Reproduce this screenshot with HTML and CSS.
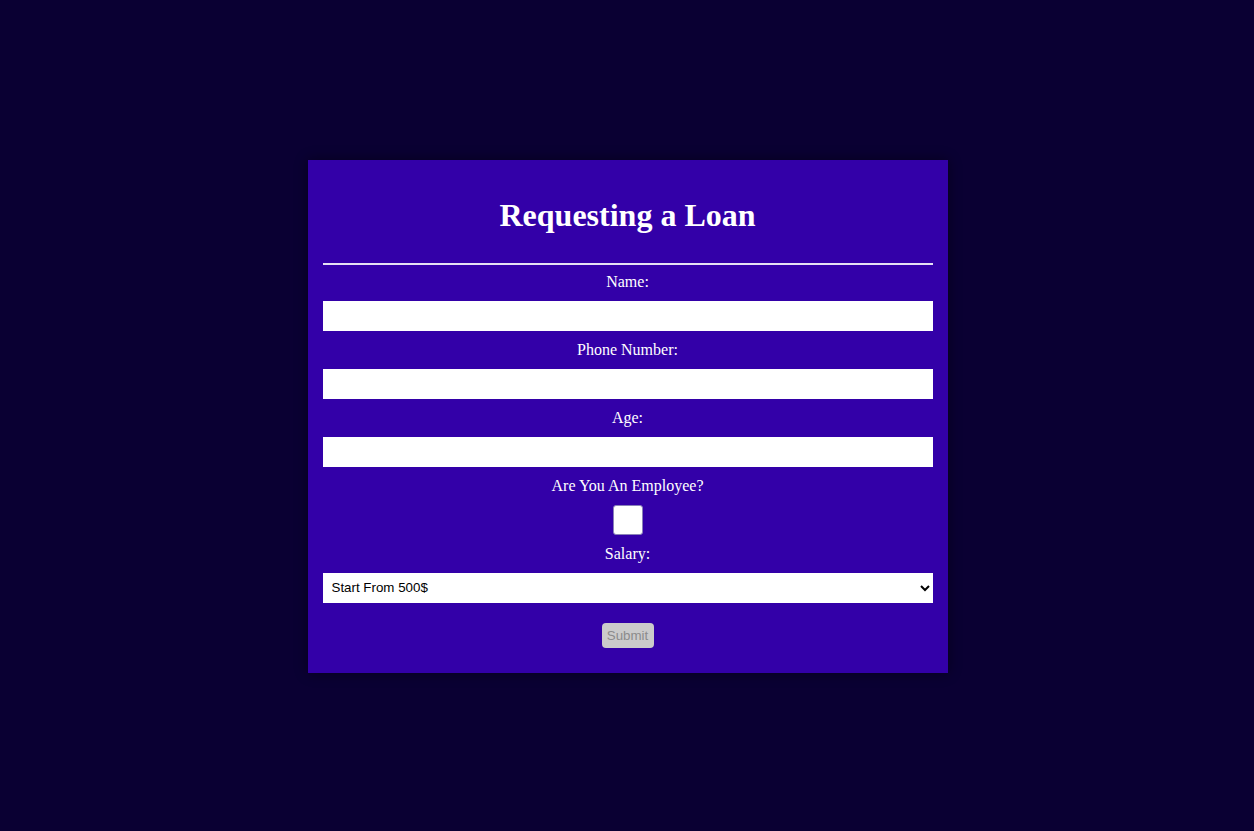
FILE: index.html
```html
<!DOCTYPE html>
<html lang="en">
<head>
<meta charset="utf-8">
<title>Requesting a Loan</title>
<link rel="stylesheet" href="styles.css">
</head>
<body>
<main class="page">
  <form class="card">
    <h1 class="title">Requesting a Loan</h1>
    <hr class="rule">
    <label class="label" for="name">Name:</label>
    <input class="field" id="name" type="text">
    <label class="label" for="phone">Phone Number:</label>
    <input class="field" id="phone" type="text">
    <label class="label" for="age">Age:</label>
    <input class="field" id="age" type="text">
    <label class="label" for="emp">Are You An Employee?</label>
    <input class="check" id="emp" type="checkbox">
    <label class="label" for="salary">Salary:</label>
    <select class="select" id="salary">
      <option>Start From 500$</option>
    </select>
    <button class="submit" type="submit" disabled>Submit</button>
  </form>
</main>
</body>
</html>
```

FILE: styles.css
```css
html, body {
  margin: 0;
  padding: 0;
  height: 100%;
}
body {
  background: #0a0033;
  font-family: "Liberation Serif", "Times New Roman", serif;
}
.page {
  height: 100%;
  display: flex;
  align-items: center;
  justify-content: center;
}
.card {
  width: 610px;
  background: #3300a8;
  padding: 16px 15px 25px;
  margin: 1px 0 0 1px;
  display: flex;
  flex-direction: column;
  align-items: center;
  box-shadow: 0 0 12px rgba(0, 0, 0, 0.45);
  color: #fff;
}
.title {
  font-size: 32px;
  font-weight: bold;
  margin: 21px 0 22px;
  line-height: 36px;
}
.rule {
  width: 100%;
  box-sizing: border-box;
  margin: 8px 0 8px;
  border: none;
  height: 2px;
  background: #e6e0f4;
}
.label {
  display: block;
  font-size: 16px;
  line-height: 18px;
  margin: 0 0 10px;
}
.field {
  display: block;
  width: 100%;
  box-sizing: border-box;
  height: 30px;
  border: none;
  background: #fff;
  margin: 0 0 10px;
  padding: 0 8px;
  font-family: "Liberation Sans", Arial, sans-serif;
}
.check {
  appearance: none;
  -webkit-appearance: none;
  width: 30px;
  height: 30px;
  margin: 0 0 10px;
  box-sizing: border-box;
  border: 1px solid #8a82b8;
  border-radius: 3px;
  background: #fff;
}
.select {
  display: block;
  width: 100%;
  height: 30px;
  border: none;
  background: #fff;
  margin: 0 0 20px;
  padding: 0 4px 0 5px;
  font-family: "Liberation Sans", Arial, sans-serif;
  font-size: 13.33px;
  color: #000;
}
.submit {
  width: 52px;
  height: 25px;
  padding: 0;
  border: none;
  border-radius: 4px;
  background: #cbcbcb;
  color: #8c8c8c;
  font-family: "Liberation Sans", Arial, sans-serif;
  font-size: 13.33px;
}
```
